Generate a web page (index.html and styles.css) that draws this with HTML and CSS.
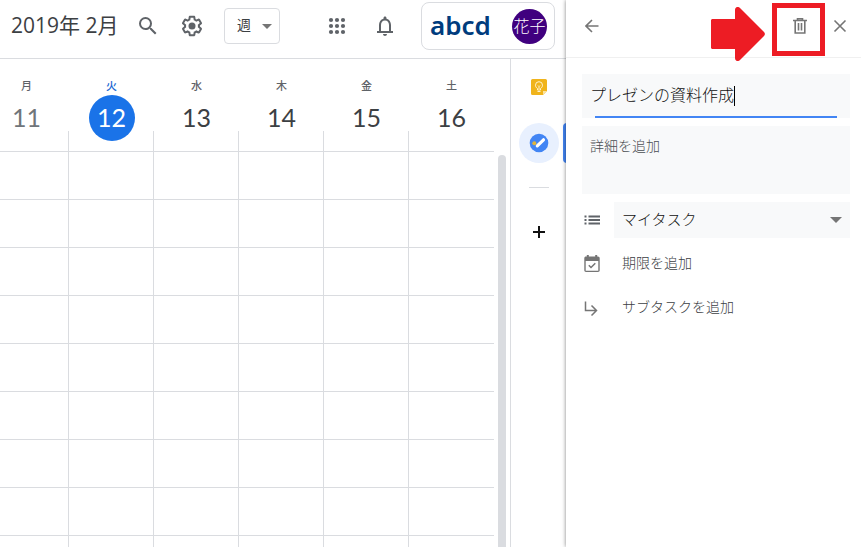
FILE: index.html
```html
<!DOCTYPE html>
<html lang="ja">
<head>
<meta charset="utf-8">
<title>カレンダー</title>
<link rel="stylesheet" href="styles.css">
</head>
<body>
<div class="app">
  <div class="calendar">
    <header class="topbar">
      <h1 class="month">2019年 2月</h1>
      <button class="icon-btn" aria-label="検索">
        <svg width="24" height="24" viewBox="0 0 24 24"><path d="M15.500 14h-.79l-.28-.27A6.470 6.470 0 0 0 16 9.500 6.500 6.500 0 1 0 9.500 16c1.610 0 3.090-.59 4.230-1.570l.27.28v.79l5 4.990L20.490 19l-4.990-5zm-6 0a4.500 4.500 0 1 1 0-9 4.500 4.500 0 0 1 0 9z"/></svg>
      </button>
      <button class="icon-btn" aria-label="設定">
        <svg width="24" height="24" viewBox="0 0 24 24"><path d="M13.850 22.250h-3.700c-.74 0-1.360-.54-1.450-1.270l-.27-1.890c-.27-.14-.53-.29-.79-.46l-1.800.72c-.7.26-1.470-.03-1.810-.65L2.200 15.530c-.35-.66-.2-1.440.36-1.880l1.530-1.190c-.01-.15-.02-.3-.02-.46 0-.15.01-.31.02-.46l-1.520-1.190c-.59-.45-.74-1.260-.37-1.880l1.850-3.190c.34-.62 1.110-.9 1.790-.63l1.810.73c.26-.17.52-.32.78-.46l.27-1.910c.09-.7.71-1.250 1.440-1.250h3.700c.74 0 1.360.54 1.450 1.270l.27 1.890c.27.14.53.29.79.46l1.800-.72c.71-.26 1.480.03 1.820.65l1.840 3.180c.36.66.2 1.440-.36 1.880l-1.520 1.190c.01.15.02.3.02.46s-.01.31-.02.46l1.520 1.190c.56.45.72 1.230.37 1.860l-1.860 3.220c-.34.62-1.110.9-1.800.63l-1.800-.72c-.26.17-.52.32-.78.46l-.27 1.910c-.1.68-.72 1.220-1.460 1.220zm-3.230-2h2.760l.37-2.550.53-.22c.44-.18.88-.44 1.340-.78l.45-.34 2.380.96 1.380-2.400-2.030-1.580.07-.56c.03-.26.06-.51.06-.78s-.03-.53-.06-.78l-.07-.56 2.030-1.580-1.390-2.400-2.390.96-.45-.35c-.42-.32-.87-.58-1.330-.77l-.52-.22-.37-2.550h-2.760l-.37 2.550-.53.21c-.44.19-.88.44-1.340.79l-.45.33-2.380-.95-1.390 2.390 2.030 1.580-.07.56a7 7 0 0 0-.06.79c0 .26.02.53.06.78l.07.56-2.030 1.580 1.380 2.400 2.390-.96.45.35c.43.33.86.58 1.330.77l.53.22.38 2.550z"/><circle cx="12" cy="12" r="3.500"/></svg>
      </button>
      <div class="select view-select">
        <select aria-label="表示">
          <option>週</option>
        </select>
      </div>
      <div class="topbar-end">
        <button class="icon-btn" aria-label="アプリ">
          <svg width="24" height="24" viewBox="0 0 24 24"><circle cx="6" cy="6" r="2.100"/><circle cx="12" cy="6" r="2.100"/><circle cx="18" cy="6" r="2.100"/><circle cx="6" cy="12" r="2.100"/><circle cx="12" cy="12" r="2.100"/><circle cx="18" cy="12" r="2.100"/><circle cx="6" cy="18" r="2.100"/><circle cx="12" cy="18" r="2.100"/><circle cx="18" cy="18" r="2.100"/></svg>
        </button>
        <button class="icon-btn" aria-label="通知">
          <svg width="24" height="24" viewBox="0 0 24 24"><path d="M18 17v-6c0-3.070-1.630-5.640-4.500-6.320V4c0-.83-.67-1.500-1.500-1.500s-1.500.67-1.500 1.500v.68C7.640 5.360 6 7.920 6 11v6H4v2h16v-2h-2zm-2 0H8v-6c0-2.480 1.510-4.500 4-4.500s4 2.020 4 4.500v6zM12 22c1.100 0 2-.9 2-2h-4c0 1.100.9 2 2 2z"/></svg>
        </button>
        <button class="account">
          <span class="brand">abcd</span>
          <span class="avatar">花子</span>
        </button>
      </div>
    </header>
    <div class="workspace">
      <main class="schedule">
        <table class="week">
          <colgroup><col class="col-cut"><col><col><col><col><col></colgroup>
          <thead>
            <tr>
              <th class="past"><span class="dow">月</span><span class="num">11</span></th>
              <th class="today"><span class="dow">火</span><span class="num">12</span></th>
              <th><span class="dow">水</span><span class="num">13</span></th>
              <th><span class="dow">木</span><span class="num">14</span></th>
              <th><span class="dow">金</span><span class="num">15</span></th>
              <th><span class="dow">土</span><span class="num">16</span></th>
            </tr>
          </thead>
          <tbody>
            <tr><td></td><td></td><td></td><td></td><td></td><td></td></tr>
            <tr><td></td><td></td><td></td><td></td><td></td><td></td></tr>
            <tr><td></td><td></td><td></td><td></td><td></td><td></td></tr>
            <tr><td></td><td></td><td></td><td></td><td></td><td></td></tr>
            <tr><td></td><td></td><td></td><td></td><td></td><td></td></tr>
            <tr><td></td><td></td><td></td><td></td><td></td><td></td></tr>
            <tr><td></td><td></td><td></td><td></td><td></td><td></td></tr>
            <tr><td></td><td></td><td></td><td></td><td></td><td></td></tr>
            <tr><td></td><td></td><td></td><td></td><td></td><td></td></tr>
          </tbody>
        </table>
        <div class="scrollbar"></div>
      </main>
      <nav class="rail">
        <button class="rail-btn" aria-label="Keep">
          <svg width="16" height="16" viewBox="0 0 16 16"><path fill="#f0b41c" d="M1.500 0h13A1.500 1.500 0 0 1 16 1.500V12l-4 4H1.500A1.500 1.500 0 0 1 0 14.500v-13A1.500 1.500 0 0 1 1.500 0z"/><path fill="#fbe3a0" d="M12 12h4l-4 4z"/><path fill="none" stroke="#fff3cf" stroke-width="1" d="M6.500 9.500C5.300 8.800 4.500 7.600 4.500 6.200a3.500 3.500 0 0 1 7 0c0 1.400-.8 2.600-2 3.300v1.500h-3zM6.500 12.500h3M7 6.500l1 1 1-1M8 7.500V10"/></svg>
        </button>
        <button class="rail-btn active" aria-label="ToDo リスト">
          <svg width="20" height="20" viewBox="0 0 20 20"><circle cx="10" cy="10" r="9.300" fill="#4285f4"/><path d="M8.300 12.900 14.500 6.800" stroke="#fff" stroke-width="3.200" stroke-linecap="round"/><circle cx="5.300" cy="10.200" r="2" fill="#e0b53c"/></svg>
        </button>
        <hr class="rail-sep">
        <button class="rail-btn" aria-label="アドオンを取得">
          <svg width="12" height="12" viewBox="0 0 12 12"><path d="M6 0v12M0 6h12" stroke="#111" stroke-width="2"/></svg>
        </button>
      </nav>
    </div>
  </div>

  <aside class="panel">
    <header class="panel-head">
      <button class="icon-btn" aria-label="戻る">
        <svg width="14" height="14" viewBox="0 0 14 14"><path class="line" d="M13.500 7H1.500M7 1 1 7l6 6"/></svg>
      </button>
      <div class="panel-actions">
        <button class="icon-btn marked" aria-label="削除">
          <svg width="14" height="16" viewBox="0 0 14 16"><path class="line" d="M0 2.500h14M4.500 2V.8h5V2M2.200 3v12h9.600V3"/><path class="line thin" d="M5.500 5v7.500M8.500 5v7.500"/></svg>
          <svg class="pointer" width="54" height="54" viewBox="0 0 54 54"><path d="M1.500 12H24V3c0-3 3-4 5-2l24 24c1.200 1.200 1.200 2.800 0 4L29 53c-2 2-5 1-5-2V42H1.500C.7 42 0 41.300 0 40.500v-27c0-.8.7-1.500 1.500-1.500z"/></svg>
        </button>
        <button class="icon-btn" aria-label="閉じる">
          <svg width="14" height="14" viewBox="0 0 14 14"><path class="line" d="M1.500 1.500l11 11M12.500 1.500l-11 11"/></svg>
        </button>
      </div>
    </header>
    <form class="task">
      <div class="title-field">
        <input type="text" aria-label="タイトル" value="プレゼンの資料作成">
        <span class="caret"></span>
      </div>
      <textarea class="details" aria-label="詳細" placeholder="詳細を追加"></textarea>
      <div class="row">
        <svg width="20" height="20" viewBox="0 0 20 20"><path d="M6.500 5.500h11.500v2H6.500zM6.500 9h11.500v2H6.500zM6.500 12.500h11.500v2H6.500zM2.500 5.500h2v2h-2zM2.500 9h2v2h-2zM2.500 12.500h2v2h-2z"/></svg>
        <div class="select list-select">
          <select aria-label="リスト">
            <option>マイタスク</option>
          </select>
        </div>
      </div>
      <button type="button" class="row add">
        <svg width="20" height="20" viewBox="0 0 20 20"><path fill="#757575" fill-rule="evenodd" d="M16 2.500h-.8V1h-2v1.500H6.800V1h-2v1.500H4C3 2.500 2.300 3.200 2.300 4.200v12.100c0 1 .7 1.700 1.700 1.700h12c1 0 1.700-.7 1.700-1.700V4.200c0-1-.7-1.700-1.700-1.700zm.3 14.200H3.700V7h12.600v9.700z"/><path class="line thin" d="M6.800 11.300l2.200 2.200 4.300-4.300"/></svg>
        <span>期限を追加</span>
      </button>
      <button type="button" class="row add">
        <svg width="20" height="20" viewBox="0 0 20 20"><path class="line thin" d="M3.500 3.500v9H14M9.500 7.500l5 5-5 5"/></svg>
        <span>サブタスクを追加</span>
      </button>
    </form>
  </aside>
</div>
</body>
</html>
```
FILE: styles.css
```css
*,
*::before,
*::after {
  box-sizing: border-box;
}

body {
  margin: 0;
  background: #fff;
  color: #3c4043;
  font-family: "Open Sans", "Noto Sans CJK JP", sans-serif;
  font-size: 14px;
}

button,
input,
select,
textarea {
  margin: 0;
  padding: 0;
  border: 0;
  border-radius: 0;
  outline: 0;
  background: none;
  color: inherit;
  font: inherit;
}

svg {
  display: block;
  flex: none;
  fill: #5f6368;
}

.line {
  fill: none;
  stroke: #757575;
  stroke-width: 2;
}

.line.thin {
  stroke-width: 1.5;
}

.app {
  display: grid;
  grid-template-columns: minmax(0, 1fr) 295px;
  height: 100vh;
  overflow: hidden;
}

.calendar {
  display: flex;
  flex-direction: column;
  min-width: 0;
  min-height: 0;
}

.topbar {
  display: flex;
  flex: none;
  align-items: center;
  height: 59px;
  padding: 0 11px 6px;
  border-bottom: 1px solid #dadce0;
}

.month {
  width: 117px;
  margin: 0 0 2px;
  font-size: 21px;
  font-weight: 400;
  line-height: 28px;
  white-space: nowrap;
}

.icon-btn {
  display: flex;
  flex: none;
  align-items: center;
  justify-content: center;
  width: 40px;
  height: 40px;
}

.topbar > .icon-btn + .icon-btn {
  margin: 0 12px 0 4px;
}

.select {
  position: relative;
}

.select::after {
  content: "";
  position: absolute;
  top: 50%;
  border: 5px solid transparent;
  border-top-color: #757575;
  border-bottom: 0;
  pointer-events: none;
}

.select select {
  width: 100%;
  height: 36px;
  padding-bottom: 3px;
  appearance: none;
}

.view-select {
  width: 56px;
}

.view-select::after {
  right: 8px;
  margin-top: -2px;
}

.view-select select {
  padding-left: 12px;
  border: 1px solid #dadce0;
  border-radius: 4px;
}

.topbar-end {
  display: flex;
  align-items: center;
  gap: 8px;
  margin-left: auto;
}

.account {
  display: flex;
  align-items: center;
  justify-content: space-between;
  width: 134px;
  height: 48px;
  margin-left: 8px;
  padding: 0 7px 0 8px;
  border: 1px solid #dadce0;
  border-radius: 8px;
}

.brand {
  margin-bottom: 2px;
  color: #003c7d;
  font-family: "Noto Sans", sans-serif;
  font-size: 26px;
  font-weight: 600;
  line-height: 32px;
}

.avatar {
  width: 35px;
  height: 35px;
  border-radius: 50%;
  background: #40007f;
  color: #fff;
  font-size: 16px;
  font-weight: 300;
  line-height: 35px;
  text-align: center;
  white-space: nowrap;
}

.workspace {
  display: flex;
  flex: 1;
  min-height: 0;
}

.schedule {
  display: flex;
  flex: 1;
  gap: 4px;
  min-width: 0;
  padding-right: 4px;
  overflow: hidden;
}

.week {
  flex: 1;
  align-self: flex-start;
  width: 100%;
  border-spacing: 0;
  table-layout: fixed;
}

.col-cut {
  width: 69px;
}

.week th,
.week td {
  padding: 0;
  border-bottom: 1px solid #dadce0;
}

.week th {
  position: relative;
  height: 93px;
  padding-top: 18px;
  font-family: Lato, "Noto Sans CJK JP", sans-serif;
  font-weight: 400;
  vertical-align: top;
}

.week th:not(:last-child)::after {
  content: "";
  position: absolute;
  right: 0;
  bottom: 0;
  width: 1px;
  height: 20px;
  background: #dadce0;
}

.week td {
  height: 48px;
}

.week td:not(:last-child) {
  border-right: 1px solid #dadce0;
}

.week th.past {
  padding-right: 16px;
  color: #70757a;
}

.dow {
  display: block;
  color: #5f6368;
  font-size: 11px;
  font-weight: 500;
  line-height: 18px;
}

.num {
  display: block;
  width: 46px;
  height: 46px;
  margin: 0 auto;
  border-radius: 50%;
  font-size: 25px;
  line-height: 44px;
}

.today .dow {
  color: #1967d2;
}

.today .num {
  background: #1a73e8;
  color: #fff;
}

.scrollbar {
  flex: none;
  width: 8px;
  margin-top: 96px;
  border-radius: 4px 4px 0 0;
  background: #dadce0;
}

.rail {
  display: flex;
  flex: none;
  flex-direction: column;
  align-items: center;
  gap: 16px;
  width: 56px;
  padding-top: 8px;
  border-left: 1px solid #dadce0;
}

.rail-btn {
  position: relative;
  display: flex;
  align-items: center;
  justify-content: center;
  width: 40px;
  height: 40px;
}

.active {
  border-radius: 50%;
  background: #e8f0fe;
}

.active::after {
  content: "";
  position: absolute;
  right: -8px;
  width: 4px;
  height: 40px;
  border-radius: 4px 0 0 4px;
  background: #4285f4;
}

.rail-sep {
  width: 20px;
  margin: 8px 0;
  border: 0;
  border-top: 1px solid #dadce0;
}

.panel {
  position: relative;
  background: #fff;
  box-shadow: 0 0 4px rgba(0, 0, 0, 0.5);
  font-family: "Noto Sans CJK JP", sans-serif;
  font-weight: 300;
}

.panel-head {
  display: flex;
  align-items: center;
  justify-content: space-between;
  height: 58px;
  padding: 0 1px 5px 6px;
  border-bottom: 1px solid #f0f0f0;
}

.panel-head .line {
  stroke-width: 1.6;
}

.panel-actions {
  display: flex;
}

.marked {
  position: relative;
}

.marked::after {
  content: "";
  position: absolute;
  top: -3px;
  left: -8px;
  width: 53px;
  height: 53px;
  border: 5px solid #ed1c24;
}

.pointer {
  position: absolute;
  top: 1px;
  right: 55px;
  fill: #ed1c24;
}

.task {
  display: flex;
  flex-direction: column;
  gap: 8px;
  padding: 16px 11px 16px 16px;
}

.title-field {
  position: relative;
  height: 44px;
  background: #f8f9fa;
}

.title-field::after {
  content: "";
  position: absolute;
  right: 13px;
  bottom: 0;
  left: 13px;
  height: 2px;
  background: #4285f4;
}

.title-field input {
  width: 100%;
  height: 40px;
  padding: 0 8px;
  color: #111;
  font-size: 16px;
}

.caret {
  position: absolute;
  top: 12px;
  left: 152px;
  width: 1px;
  height: 20px;
  background: #000;
}

.details {
  height: 68px;
  padding: 8px;
  background: #f8f9fa;
  line-height: 22px;
  resize: none;
}

.details::placeholder {
  color: #4a4e52;
}

.row {
  display: flex;
  align-items: center;
  gap: 12px;
  height: 36px;
  text-align: left;
}

.list-select {
  flex: 1;
  background: #f8f9fa;
}

.list-select::after {
  right: 8px;
  margin-top: -3px;
  border-width: 6px 6px 0;
}

.list-select select {
  padding-left: 8px;
  color: #111;
  font-size: 15px;
}

.add {
  gap: 20px;
  color: #3c4043;
}

.add span {
  padding-bottom: 4px;
}
```
